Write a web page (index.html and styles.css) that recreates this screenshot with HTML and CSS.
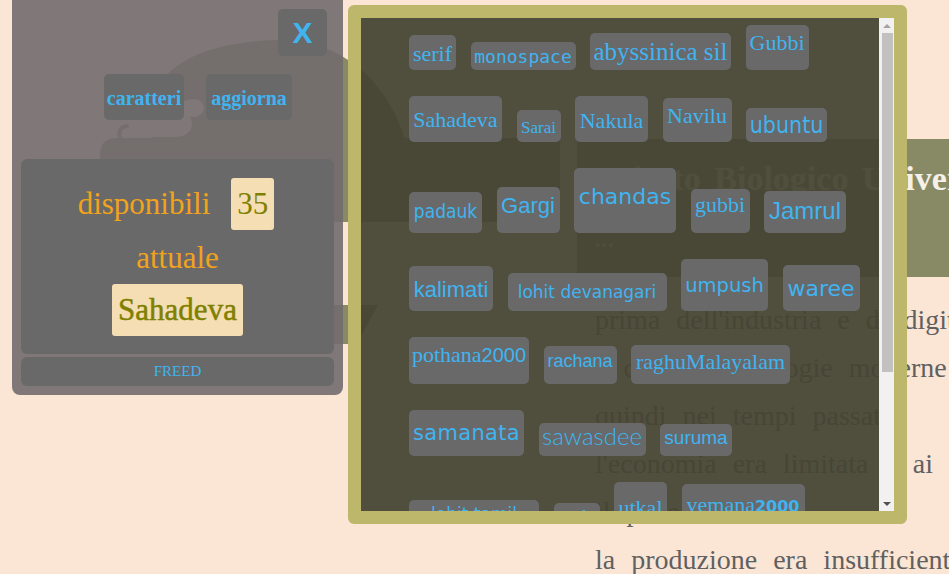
FILE: index.html
```html
<!DOCTYPE html>
<html lang="it">
<head>
<meta charset="utf-8">
<title>Caratteri</title>
<link rel="stylesheet" href="styles.css">
</head>
<body>
<div class="page">
  <svg class="logo" width="460" height="305" viewBox="100 40 460 305" aria-hidden="true">
    <path class="olive" d="M152,140 L152,100 C165,55 225,40 283,40 C337,40 387,78 405,140 Z"/>
    <path class="olive" d="M100,155 Q100,138 117,138 L560,138 L560,222 L100,222 Z"/>
    <path class="antenna" d="M121,140 C118,133 119,127 127,126"/>
    <path class="hole" d="M150,137 C148,118 160,106 176,108 C182,99 198,96 203,104 C207,112 197,120 189,116 C196,126 190,137 174,137 Z"/>
    <path class="olive" d="M100,305 L378,305 L357,344 L100,344 Z"/>
  </svg>
  <div class="content">
    <div class="title-box">
      <h1 class="title">Istituto Biologico Universale</h1>
      <div class="dots">...</div>
    </div>
    <div class="text">
      <p class="line">prima dell'industria e di digitalizzazione</p>
      <p class="line">e con le tecnologie moderne</p>
      <p class="line">quindi nei tempi passati</p>
      <p class="line">l'economia era limitata e ai mercati</p>
      <p class="line">il pane: la base</p>
      <p class="line">la produzione era insufficiente</p>
    </div>
  </div>
</div>

<aside class="left-panel">
  <button class="close" type="button">X</button>
  <div class="actions">
    <button class="btn btn-fonts" type="button">caratteri</button>
    <button class="btn btn-refresh" type="button">aggiorna</button>
  </div>
  <div class="info">
    <div class="avail">
      <span class="label">disponibili</span>
      <span class="value">35</span>
    </div>
    <div class="label current-label">attuale</div>
    <div class="value current">Sahadeva</div>
  </div>
  <div class="freed">FREED</div>
</aside>

<section class="font-panel">
  <div class="font-scroll">
    <div class="font-list">
      <div class="font-row">
        <span class="tag t-serif">serif</span>
        <span class="tag t-mono">monospace</span>
        <span class="tag t-abyssinica">abyssinica sil</span>
        <span class="tag t-gubbi-cap">Gubbi</span>
      </div>
      <div class="font-row">
        <span class="tag t-sahadeva">Sahadeva</span>
        <span class="tag t-sarai">Sarai</span>
        <span class="tag t-nakula">Nakula</span>
        <span class="tag t-navilu">Navilu</span>
        <span class="tag t-ubuntu">ubuntu</span>
      </div>
      <div class="font-row">
        <span class="tag t-padauk">padauk</span>
        <span class="tag t-gargi">Gargi</span>
        <span class="tag t-chandas">chandas</span>
        <span class="tag t-gubbi">gubbi</span>
        <span class="tag t-jamrul">Jamrul</span>
      </div>
      <div class="font-row">
        <span class="tag t-kalimati">kalimati</span>
        <span class="tag t-lohit">lohit devanagari</span>
        <span class="tag t-umpush">umpush</span>
        <span class="tag t-waree">waree</span>
      </div>
      <div class="font-row">
        <span class="tag t-pothana">pothana<span class="digits">2000</span></span>
        <span class="tag t-rachana">rachana</span>
        <span class="tag t-raghu">raghuMalayalam</span>
      </div>
      <div class="font-row">
        <span class="tag t-samanata">samanata</span>
        <span class="tag t-sawasdee">sawasdee</span>
        <span class="tag t-suruma">suruma</span>
      </div>
      <div class="font-row">
        <span class="tag t-tamil">lohit tamil</span>
        <span class="tag t-arab">arab</span>
        <span class="tag t-utkal">utkal</span>
        <span class="tag t-vemana">vemana<span class="digits-bold">2000</span></span>
      </div>
      <div class="font-row">
        <span class="tag t-extra">lohit bengali</span>
        <span class="tag t-extra">meera</span>
        <span class="tag t-extra">mukti</span>
        <span class="tag t-extra">kedage</span>
      </div>
    </div>
  </div>
  <div class="scrollbar" aria-hidden="true">
    <div class="sb-button"><span class="sb-arrow-up"></span></div>
    <div class="sb-track"><div class="sb-thumb"></div></div>
    <div class="sb-button"><span class="sb-arrow-down"></span></div>
  </div>
</section>
</body>
</html>
```

FILE: styles.css
```css
html, body {
  margin: 0;
  height: 100%;
  overflow: hidden;
}

body {
  background: #fbe6d6;
  font-family: "Liberation Serif", serif;
  position: relative;
}

/* ---------- underlying page ---------- */
.page {
  display: flex;
  align-items: flex-start;
  padding: 40px 0 0 100px;
}

.logo {
  flex: none;
  display: block;
}

.logo .olive { fill: #888a65; }
.logo .hole { fill: #fbe6d6; }
.logo .antenna {
  fill: none;
  stroke: #888a65;
  stroke-width: 4;
  stroke-linecap: round;
}

.content {
  flex: none;
  width: 480px;
  margin-left: 17px;
}

.title-box {
  margin-top: 99px;
  height: 138px;
  box-sizing: border-box;
  padding-left: 18px;
  background: #888a65;
}

.title {
  margin: 0;
  padding-top: 20px;
  font-size: 34px;
  line-height: 40px;
  font-weight: bold;
  color: #f5f1e8;
  white-space: nowrap;
  word-spacing: 5px;
}

.dots {
  margin-top: 29px;
  font-size: 22px;
  line-height: 24px;
  font-weight: bold;
  color: #e6e6e0;
  letter-spacing: 1px;
}

.text {
  margin-top: 19px;
  padding-left: 18px;
}

.line {
  margin: 0;
  font-size: 28px;
  line-height: 48px;
  color: #606060;
  white-space: nowrap;
  word-spacing: 9px;
}

/* ---------- left panel ---------- */
.left-panel {
  position: absolute;
  left: 12px;
  top: 0;
  width: 331px;
  box-sizing: border-box;
  padding: 9px;
  background: rgba(114, 108, 110, 0.9);
  border-radius: 0 0 8px 8px;
  display: flex;
  flex-direction: column;
}

.close {
  align-self: flex-end;
  margin-right: 7px;
  width: 49px;
  height: 47px;
  padding: 0;
  border: 0;
  border-radius: 5px;
  background: #696969;
  color: #40b4f0;
  font: bold 30px/1 "Liberation Sans", sans-serif;
  display: flex;
  align-items: center;
  justify-content: center;
}

.actions {
  display: flex;
  gap: 22px;
  margin: 18px 0 0 83px;
}

.btn {
  height: 46px;
  padding: 3px 0 0;
  border: 0;
  border-radius: 5px;
  background: #696969;
  color: #40b4f0;
  font: bold 20px/43px "Liberation Serif", serif;
}

.btn-fonts { width: 80px; }
.btn-refresh { width: 86px; }

.info {
  margin-top: 39px;
  padding: 19px 0 18px;
  background: #696969;
  border-radius: 6px;
  display: flex;
  flex-direction: column;
  align-items: center;
}

.avail {
  display: flex;
  align-items: baseline;
  gap: 21px;
  margin-left: -3px;
}

.label {
  color: #f2a31b;
  font-size: 31px;
  line-height: 36px;
}

.value {
  background: #f5deb3;
  color: #808000;
  font-size: 31px;
  line-height: 36px;
  padding: 8px 6px;
  border-radius: 3px;
}

.current-label {
  margin-top: 10px;
}

.current {
  margin-top: 8px;
  -webkit-text-stroke: 0.5px #808000;
}

.freed {
  margin-top: 3px;
  height: 29px;
  background: #696969;
  border-radius: 6px;
  color: #40b4f0;
  font-size: 15px;
  line-height: 29px;
  text-align: center;
}

/* ---------- font chooser ---------- */
.font-panel {
  position: absolute;
  left: 348px;
  top: 5px;
  width: 559px;
  height: 519px;
  box-sizing: border-box;
  border: 13px solid #bdb76b;
  border-radius: 6px;
  background: rgba(69, 68, 51, 0.94);
  display: flex;
}

.font-scroll {
  flex: 1;
  min-width: 0;
  overflow: hidden;
  padding: 7px 12px 0 48px;
}

.font-list {
  display: flex;
  flex-direction: column;
  gap: 26px;
}

.font-row {
  display: flex;
  align-items: flex-end;
  gap: 14.5px;
}

.tag {
  flex: none;
  box-sizing: border-box;
  background: #696969;
  color: #40b4f0;
  border-radius: 5px;
  text-align: center;
  white-space: nowrap;
  line-height: 1;
  font-family: "Liberation Serif", serif;
  font-size: 22px;
}

.t-serif      { width: 47px;  height: 35px; padding-top: 8px; }
.t-mono       { width: 105px; height: 28px; padding-top: 6px; font-family: "DejaVu Sans Mono", monospace; font-size: 18px; }
.t-abyssinica { width: 141px; height: 37px; padding-top: 6px; font-size: 25px; }
.t-gubbi-cap  { width: 63px;  height: 45px; padding-top: 7px; }

.t-sahadeva   { width: 93px;  height: 46px; padding-top: 13px; }
.t-sarai      { width: 44px;  height: 32px; padding-top: 9px; font-size: 17px; }
.t-nakula     { width: 73px;  height: 46px; padding-top: 14px; }
.t-navilu     { width: 69px;  height: 44px; padding-top: 7px; }
.t-ubuntu     { width: 81px;  height: 34px; padding-top: 6px; font-family: "DejaVu Sans Condensed", "DejaVu Sans", sans-serif; font-stretch: condensed; font-size: 23px; }

.t-padauk     { width: 73px;  height: 41px; padding-top: 10px; font-family: "DejaVu Sans Condensed", "DejaVu Sans", sans-serif; font-stretch: condensed; font-size: 19px; }
.t-gargi      { width: 63px;  height: 46px; padding-top: 8px; font-family: "Liberation Sans", sans-serif; }
.t-chandas    { width: 102px; height: 65px; padding-top: 18px; font-family: "DejaVu Sans", sans-serif; }
.t-gubbi      { width: 59px;  height: 44px; padding-top: 5px; }
.t-jamrul     { width: 82px;  height: 42px; padding-top: 8px; font-family: "Liberation Sans", sans-serif; font-size: 24px; }

.t-kalimati   { width: 84px;  height: 45px; padding-top: 13px; font-family: "Liberation Sans", sans-serif; }
.t-lohit      { width: 159px; height: 38px; padding-top: 11px; font-family: "DejaVu Sans", sans-serif; font-size: 17px; }
.t-umpush     { width: 87px;  height: 52px; padding-top: 17px; font-family: "DejaVu Sans", sans-serif; font-size: 19.5px; }
.t-waree      { width: 77px;  height: 46px; padding-top: 13px; font-family: "DejaVu Sans", sans-serif; }

.t-pothana    { width: 120px; height: 47px; padding-top: 7px; }
.t-pothana .digits { font-family: "Liberation Sans", sans-serif; font-size: 20px; }
.t-rachana    { width: 73px;  height: 38px; padding-top: 6px; font-family: "Liberation Sans", sans-serif; font-size: 18px; }
.t-raghu      { width: 159px; height: 39px; padding-top: 6px; }

.t-samanata   { width: 115px; height: 46px; padding-top: 13px; font-family: "DejaVu Sans", sans-serif; font-size: 21px; letter-spacing: 0.3px; }
.t-sawasdee   { width: 107px; height: 33px; padding-top: 1px; font-family: Lato, sans-serif; font-weight: 300; font-size: 24px; }
.t-suruma     { width: 72px;  height: 32px; padding-top: 4px; font-family: "Liberation Sans", sans-serif; font-size: 19px; }

.t-tamil      { width: 130px; height: 29px; padding-top: 6px; font-family: "DejaVu Sans", sans-serif; font-size: 17px; }
.t-arab       { width: 46px;  height: 26px; padding-top: 5px; font-size: 17px; }
.t-utkal      { width: 53px;  height: 47px; padding-top: 15px; }
.t-vemana     { width: 123px; height: 45px; padding-top: 10px; }
.t-vemana .digits-bold { font-family: "DejaVu Sans", sans-serif; font-weight: bold; font-size: 16px; }

.t-extra      { height: 44px; padding: 10px 6px 0; font-size: 20px; }

/* classic scrollbar */
.scrollbar {
  flex: none;
  width: 15px;
  display: flex;
  flex-direction: column;
  background: #f1f1f1;
}

.sb-button {
  flex: none;
  height: 15px;
  display: flex;
  align-items: center;
  justify-content: center;
}

.sb-arrow-up,
.sb-arrow-down {
  width: 0;
  height: 0;
  border-left: 4px solid transparent;
  border-right: 4px solid transparent;
}

.sb-arrow-up { border-bottom: 4px solid #a3a3a3; }
.sb-arrow-down { border-top: 4px solid #505050; }

.sb-track {
  flex: 1;
  padding: 0 1px 0 3px;
}

.sb-thumb {
  height: 339px;
  background: #c1c1c1;
}
```
